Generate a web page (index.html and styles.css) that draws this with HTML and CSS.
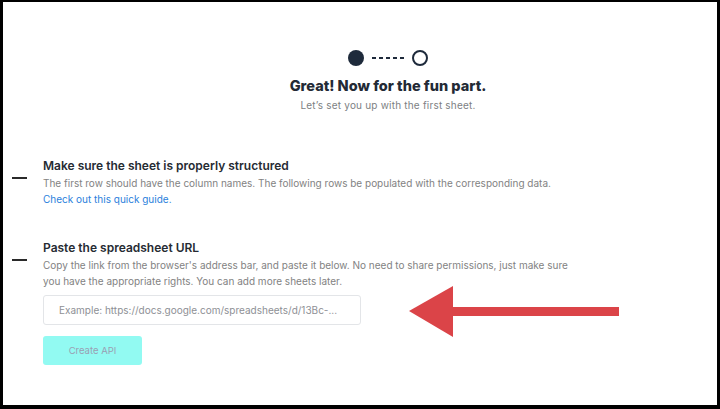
FILE: index.html
```html
<!DOCTYPE html>
<html>
<head>
<meta charset="utf-8">
<link rel="stylesheet" href="styles.css">
</head>
<body>
<div class="frame">
  <header class="head">
    <div class="steps">
      <span class="dot filled"></span>
      <span class="dashes"><i></i><i></i><i></i><i></i><i></i></span>
      <span class="dot hollow"></span>
    </div>
    <h1 class="title">Great! Now for the fun part.</h1>
    <p class="subtitle">Let’s set you up with the first sheet.</p>
  </header>

  <section class="step step-one">
    <span class="marker"></span>
    <div class="step-body">
      <h2 class="step-title">Make sure the sheet is properly structured</h2>
      <p class="step-text">The first row should have the column names. The following rows be populated with the corresponding data.</p>
      <a class="link" href="#">Check out this quick guide.</a>
    </div>
  </section>

  <section class="step step-two">
    <span class="marker"></span>
    <div class="step-body">
      <h2 class="step-title">Paste the spreadsheet URL</h2>
      <p class="step-text">Copy the link from the browser's address bar, and paste it below. No need to share permissions, just make sure you have the appropriate rights. You can add more sheets later.</p>
      <input class="url" type="text" placeholder="Example: https://docs.google.com/spreadsheets/d/13Bc-...">
      <button class="create">Create API</button>
    </div>
  </section>

  <svg class="arrow" width="220" height="56" viewBox="0 0 220 56">
    <polygon points="0,25 44,0 44,51" fill="#db4448"/>
    <rect x="43" y="21" width="167" height="9" fill="#db4448"/>
  </svg>
</div>
</body>
</html>
```

FILE: styles.css
```css
* { box-sizing: border-box; }
html, body { margin: 0; padding: 0; }
body {
  width: 720px;
  height: 409px;
  font-family: Inter, "Noto Sans", sans-serif;
  background: #fff;
}
.frame {
  position: relative;
  width: 720px;
  height: 409px;
  border-style: solid;
  border-color: #000;
  border-width: 2px 3px 4px 3px;
  background: #fff;
  overflow: hidden;
}
.head {
  display: flex;
  flex-direction: column;
  align-items: center;
  padding-top: 48px;
  padding-left: 56px;
}
.steps {
  display: flex;
  align-items: center;
  gap: 8px;
  height: 16px;
}
.dot {
  width: 16px;
  height: 16px;
  border-radius: 50%;
}
.dot.filled { background: #1e2a3b; }
.dot.hollow { border: 2.6px solid #1e2a3b; }
.dashes {
  display: flex;
  gap: 3px;
}
.dashes i {
  display: block;
  width: 4px;
  height: 1.5px;
  background: #1e2a3b;
}
.title {
  margin: 11px 0 0;
  font-size: 14.5px;
  font-weight: 800;
  color: #232a35;
  line-height: 18px;
}
.subtitle {
  margin: 3px 0 0;
  font-size: 10px;
  line-height: 14px;
  color: #7d7f83;
  letter-spacing: 0.2px;
}
.step {
  display: flex;
  align-items: flex-start;
  padding-left: 9px;
}
.step-one { margin-top: 46px; }
.step-two { margin-top: 33px; }
.marker {
  display: block;
  width: 15px;
  height: 1.5px;
  background: #2a2a2a;
  margin-top: 19px;
  margin-right: 16px;
}
.step-body { display: flex; flex-direction: column; align-items: flex-start; }
.step-title {
  margin: 0;
  font-size: 12px;
  font-weight: 600;
  line-height: 16px;
  color: #262b33;
}
.step-text {
  margin: 1px 0 0;
  font-size: 10px;
  line-height: 16px;
  color: #828282;
  width: 535px;
}
.link {
  font-size: 10px;
  line-height: 16px;
  color: #2b7fdc;
  text-decoration: none;
}
.url {
  margin-top: 6px;
  width: 318px;
  height: 30px;
  border: 1px solid #e3e5e8;
  border-radius: 3px;
  padding: 0 15px;
  font-family: Inter, "Noto Sans", sans-serif;
  font-size: 10px;
  color: #333;
  outline: none;
}
.url::placeholder { color: #8e9095; }
.create {
  margin-top: 11px;
  width: 99px;
  height: 29px;
  border: none;
  border-radius: 3px;
  background: #92faf2;
  color: #9a9fb3;
  font-family: Inter, "Noto Sans", sans-serif;
  font-size: 9.5px;
}
.arrow {
  position: absolute;
  left: 406px;
  top: 284px;
}
```
